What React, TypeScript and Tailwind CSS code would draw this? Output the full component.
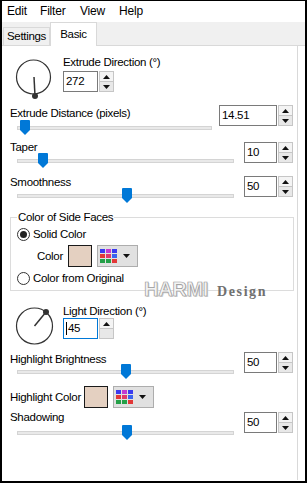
import React from 'react';

const gridCells = [
	'bg-[#3a3aef]',
	'bg-[#c23ad2]',
	'bg-[#3a3aef]',
	'bg-[#e23838]',
	'bg-[#e0386a]',
	'bg-[#3a62ef]',
	'bg-[#24a048]',
	'bg-[#24a048]',
	'bg-[#e23838]',
];

function Arrow({ up }: { up: boolean }) {
	return (
		<svg width="7" height="4" viewBox="0 0 7 4">
			<polygon points={up ? '0,4 7,4 3.5,0' : '0,0 7,0 3.5,4'} fill="#111" />
		</svg>
	);
}

function SpinBox({ value, boxW, focused, onlyUp }: { value: string; boxW: string; focused?: boolean; onlyUp?: boolean }) {
	return (
		<div className="flex h-[21px] gap-px">
			<div className={`flex items-center border bg-white pl-[2px] ${boxW} ${focused ? 'border-[#0078d7]' : 'border-[#7a7a7a]'}`}>
				{focused && <span className="mr-px h-[13px] w-px bg-black" />}
				{value}
			</div>
			<div className="flex h-full w-[15px] flex-col">
				<div className="flex flex-1 items-center justify-center border border-[#c6c6c6] bg-[#f4f4f4]">
					<Arrow up />
				</div>
				<div className="-mt-px flex flex-1 items-center justify-center border border-[#c6c6c6] bg-[#e8e8e8]">
					{!onlyUp && <Arrow up={false} />}
				</div>
			</div>
		</div>
	);
}

function SliderRow({
	label,
	value,
	boxW,
	trackW,
	thumb,
	boxMt,
	trackMt,
	h,
}: {
	label: string;
	value: string;
	boxW: string;
	trackW: string;
	thumb: string;
	boxMt: string;
	trackMt: string;
	h: string;
}) {
	return (
		<div className={`flex ${h}`}>
			<div className="flex flex-col pl-[8px] pt-[2px]">
				<span>{label}</span>
				<div className={`relative ml-[7px] h-[4px] border border-[#d4d4d4] bg-[#e9e9e9] ${trackW} ${trackMt}`}>
					<svg className={`absolute top-[-7px] ${thumb}`} width="10" height="15" viewBox="0 0 10 15">
						<path d="M0 1 Q0 0 1 0 H9 Q10 0 10 1 V10 L5 15 L0 10 Z" fill="#0078d7" />
					</svg>
				</div>
			</div>
			<div className={`ml-auto ${boxMt}`}>
				<SpinBox value={value} boxW={boxW} />
			</div>
		</div>
	);
}

function Radio({ checked }: { checked?: boolean }) {
	return (
		<span className="flex h-[13px] w-[13px] items-center justify-center rounded-full border border-[#333] bg-white">
			{checked && <span className="h-[7px] w-[7px] rounded-full bg-[#222]" />}
		</span>
	);
}

function ColorPick() {
	return (
		<>
			<div className="h-[22px] w-[24px] border border-[#1a1a1a] bg-[#e4d0c1]" />
			<div className="ml-[5px] flex h-[22px] w-[41px] items-center border border-[#adadad] bg-[#e1e1e1] pl-[2px]">
				<div className="grid w-[17px] grid-cols-3 gap-px">
					{gridCells.map((c, i) => (
						<span key={i} className={`h-[4px] ${c}`} />
					))}
				</div>
				<span className="ml-[6px] flex">
					<Arrow up={false} />
				</span>
			</div>
		</>
	);
}

export default function App() {
	return (
		<div className="h-[483px] w-[307px] overflow-hidden border-x-2 border-b-2 border-t border-black bg-white font-['Liberation_Sans',Arial,sans-serif] text-[11.5px] leading-[13px] tracking-[-0.3px] text-black">
			<div className="flex h-[21px] items-center pl-[5px] text-[12px] leading-[21px] tracking-[-0.2px]">
				<span className="w-[33px]">Edit</span>
				<span className="w-[40px]">Filter</span>
				<span className="w-[39px]">View</span>
				<span>Help</span>
			</div>

			<div className="flex h-[24px] items-end border-b border-[#d9d9d9] bg-[#f0f0f0] pl-px">
				<div className="flex h-[18px] w-[47px] items-center justify-center border-x border-t border-[#d9d9d9]">Settings</div>
				<div className="relative -mb-px flex h-[24px] w-[47px] justify-center border-x border-t border-[#d9d9d9] bg-white pt-[5px]">Basic</div>
			</div>

			<div className="relative h-[434px] w-[296px] border-r border-[#d9d9d9] pr-[4px]">
				<div className="flex pt-[10px]">
					<svg className="ml-[10px]" width="44" height="44" viewBox="0 0 44 44">
						<circle cx="21.5" cy="21" r="17" fill="none" stroke="#333" strokeWidth="1.2" />
						<line x1="22" y1="21" x2="23" y2="40" stroke="#333" strokeWidth="1.5" />
						<circle cx="23" cy="40" r="3" fill="#333" />
					</svg>
					<div className="ml-[7px] flex flex-col">
						<span>Extrude Direction (°)</span>
						<div className="mt-[2px]">
							<SpinBox value="272" boxW="w-[35px]" />
						</div>
					</div>
				</div>

				<div className="mt-[5px]">
					<SliderRow label="Extrude Distance (pixels)" value="14.51" boxW="w-[58px]" trackW="w-[195px]" thumb="left-[2px]" boxMt="mt-0" trackMt="mt-[6px]" h="h-[34px]" />
					<SliderRow label="Taper" value="10" boxW="w-[33px]" trackW="w-[217px]" thumb="left-[20px]" boxMt="mt-[3px]" trackMt="mt-[5px]" h="h-[35px]" />
					<SliderRow label="Smoothness" value="50" boxW="w-[33px]" trackW="w-[217px]" thumb="left-[104px]" boxMt="mt-[2px]" trackMt="mt-[5px]" h="h-[37px]" />
				</div>

				<fieldset className="ml-[8px] w-[284px] border border-[#dcdcdc] pb-[5px]">
					<legend className="ml-[6px] px-px">Color of Side Faces</legend>
					<div className="ml-[6px] mt-[4px] flex h-[13px] items-center">
						<Radio checked />
						<span className="ml-[3px]">Solid Color</span>
					</div>
					<div className="mt-[4px] flex h-[22px] items-center pl-[26px]">
						<span className="w-[31px]">Color</span>
						<ColorPick />
					</div>
					<div className="ml-[6px] mt-[5px] flex h-[13px] items-center">
						<Radio />
						<span className="ml-[3px]">Color from Original</span>
					</div>
				</fieldset>

				<div className="mt-[14px] flex">
					<svg className="ml-[10px]" width="44" height="44" viewBox="0 0 44 44">
						<circle cx="22.5" cy="21" r="18" fill="none" stroke="#333" strokeWidth="1.2" />
						<line x1="22.5" y1="21" x2="34" y2="7" stroke="#333" strokeWidth="1.5" />
						<circle cx="34" cy="7" r="3" fill="#333" />
					</svg>
					<div className="ml-[7px] flex flex-col">
						<span>Light Direction (°)</span>
						<SpinBox value="45" boxW="w-[35px]" focused onlyUp />
					</div>
				</div>

				<div className="mt-[2px]">
					<SliderRow label="Highlight Brightness" value="50" boxW="w-[33px]" trackW="w-[217px]" thumb="left-[103px]" boxMt="mt-px" trackMt="mt-[4px]" h="h-[35px]" />
				</div>
				<div className="flex h-[22px] items-center pl-[8px]">
					<span className="w-[74px]">Highlight Color</span>
					<ColorPick />
				</div>
				<div className="mt-px">
					<SliderRow label="Shadowing" value="50" boxW="w-[33px]" trackW="w-[217px]" thumb="left-[104px]" boxMt="mt-[3px]" trackMt="mt-[7px]" h="h-[35px]" />
				</div>

				{/* watermark stamped over the screenshot */}
				<div className="absolute left-[142px] top-[233px] flex items-baseline gap-[9px]">
					<span className="font-['Liberation_Sans',Arial,sans-serif] text-[20px] font-bold leading-[20px] tracking-[-0.3px] text-[#f4f4f4] [-webkit-text-stroke:0.7px_#9a9a9a] [text-shadow:1px_1px_0_#d0d0d0]">
						HARMI
					</span>
					<span className="font-['Liberation_Serif','Times_New_Roman',serif] text-[14px] font-bold tracking-[1.6px] text-[#707070]">Design</span>
				</div>
			</div>
		</div>
	);
}
